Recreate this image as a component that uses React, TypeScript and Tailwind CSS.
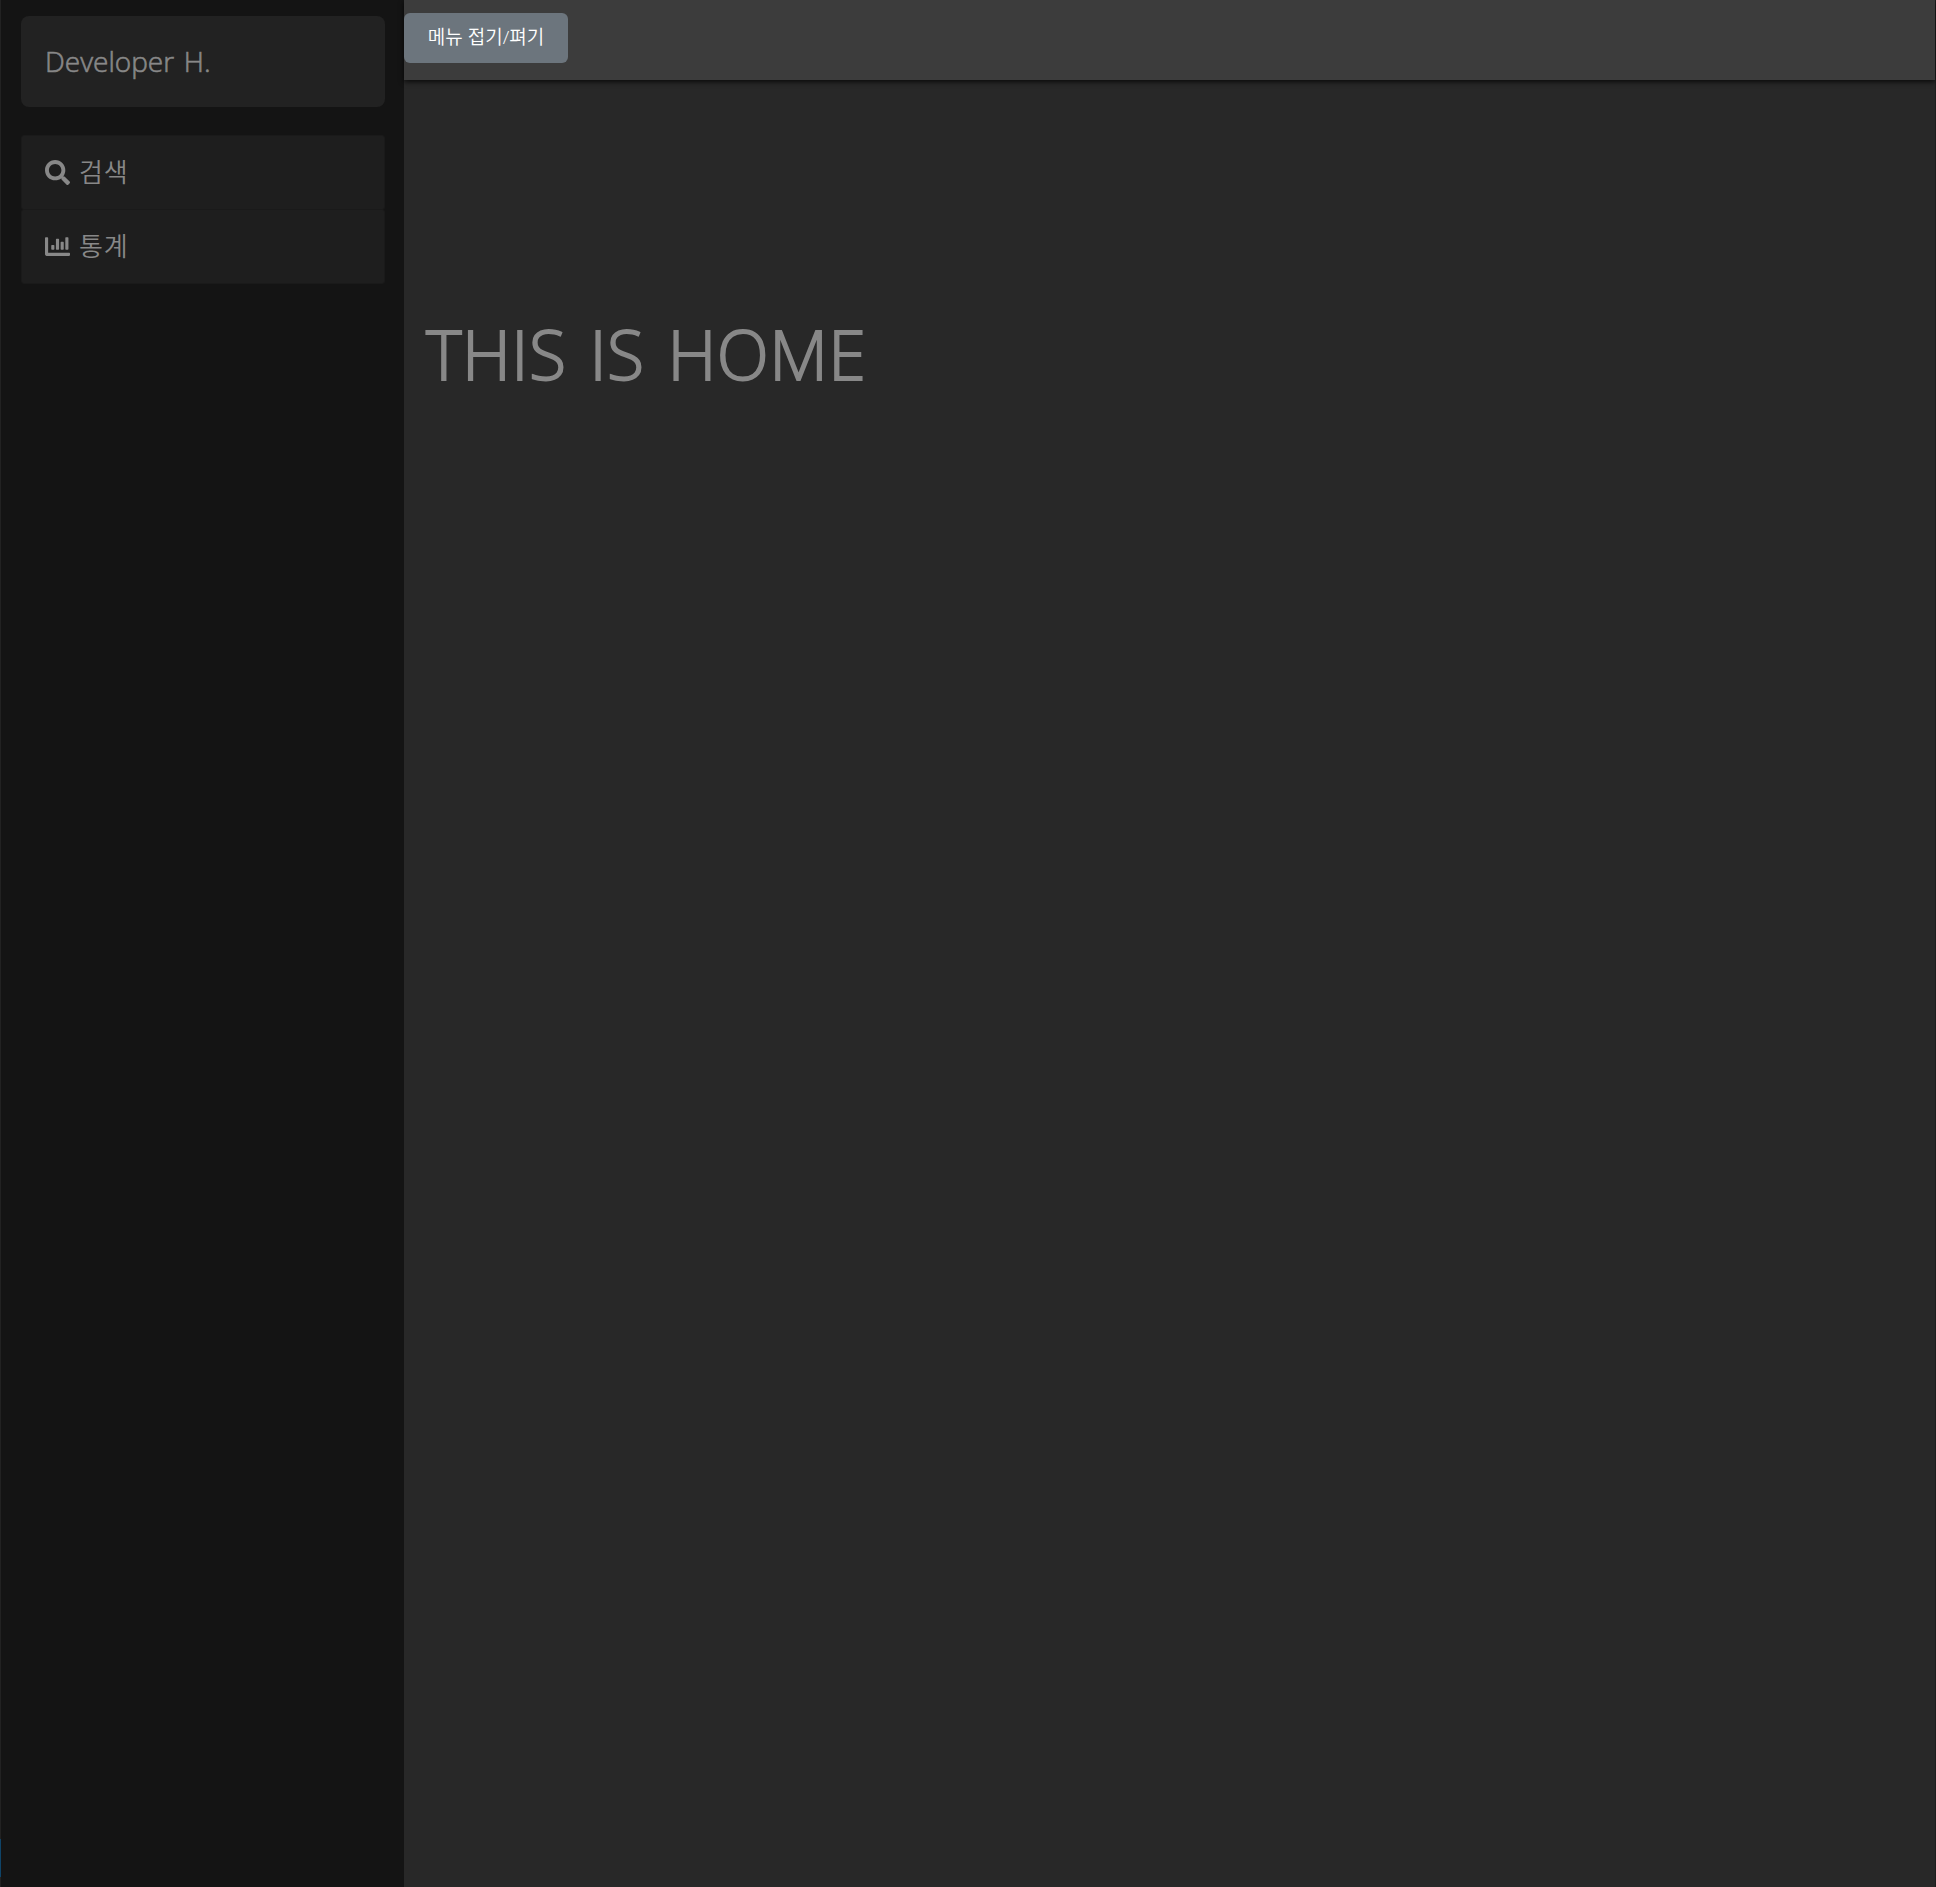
import type { ReactNode } from "react";
import { FaSearch } from "react-icons/fa";

function ChartIcon() {
  return (
    <svg viewBox="0 0 512 512" className="block size-[25px]" fill="currentColor">
      <path d="M332.8 320h38.4c6.4 0 12.8-6.4 12.8-12.8V172.800c0-6.400-6.400-12.800-12.800-12.800h-38.400c-6.400 0-12.800 6.400-12.800 12.800v134.400c0 6.400 6.400 12.800 12.800 12.800zm96 0h38.400c6.400 0 12.800-6.400 12.800-12.800V76.800c0-6.400-6.400-12.800-12.800-12.800h-38.400c-6.400 0-12.800 6.400-12.800 12.800v230.400c0 6.400 6.400 12.800 12.800 12.800zm-288 0h38.400c6.400 0 12.800-6.400 12.800-12.800v-70.400c0-6.400-6.400-12.800-12.800-12.800h-38.400c-6.400 0-12.800 6.400-12.800 12.800v70.400c0 6.400 6.400 12.800 12.800 12.800zm96 0h38.400c6.400 0 12.800-6.400 12.800-12.800V108.800c0-6.400-6.400-12.800-12.800-12.800h-38.400c-6.400 0-12.800 6.400-12.800 12.800v198.400c0 6.400 6.400 12.800 12.800 12.800zM496 384H64V80c0-8.840-7.160-16-16-16H16C7.160 64 0 71.160 0 80v336c0 17.670 14.330 32 32 32h464c8.840 0 16-7.160 16-16v-32c0-8.840-7.160-16-16-16z" />
    </svg>
  );
}

function MenuItem({ icon, label }: { icon: ReactNode; label: string }) {
  return (
    <li className="-mt-px flex h-[75px] items-center gap-[9px] rounded-[3px] border border-[#1a1a1a] bg-[#1e1e1e] pl-[23px]">
      {icon}
      <span className="pb-px text-[26px] leading-none font-[350] tracking-[0.8px]">{label}</span>
    </li>
  );
}

export default function App() {
  return (
    <div className="flex h-[1887px] w-[1936px] border-r border-r-[#1e1e1e] bg-[#282828] font-['Open_Sans','Noto_Sans_CJK_KR',sans-serif] text-[#888888]">
      <div className="flex w-px shrink-0 flex-col justify-end bg-[#222222] pb-[10px]">
        <div className="h-[38px] bg-[#0f4468]" />
      </div>
      <aside className="w-[403px] shrink-0 bg-[#141414] pt-4 pr-[19px] pl-5">
        <div className="flex h-[91px] items-center rounded-lg bg-[#222222] pb-[2px] pl-6 text-[28px] font-light [word-spacing:2.5px] [-webkit-text-stroke:0.6px_#888888]">
          <span>Developer H.</span>
        </div>
        <ul className="mt-[29px] flex flex-col">
          <MenuItem icon={<FaSearch className="block size-[25px]" />} label="검색" />
          <MenuItem icon={<ChartIcon />} label="통계" />
        </ul>
      </aside>
      <div className="flex min-w-0 grow flex-col">
        <header className="h-20 shrink-0 bg-[#3c3c3c] pt-[13px] shadow-[0_2px_5px_rgba(0,0,0,0.75)]">
          <button className="flex h-[50px] w-[164px] items-center justify-center rounded-md bg-[#6c757d] pb-px text-[19px] font-[350] whitespace-nowrap text-white">
            메뉴 접기/펴기
          </button>
        </header>
        <main className="px-[22px] pt-[229px]">
          <h1 className="text-[68px] leading-[90px] font-light tracking-[0.4px] whitespace-nowrap [word-spacing:5px] [-webkit-text-stroke:1.8px_#888888]">
            THIS IS HOME
          </h1>
        </main>
      </div>
    </div>
  );
}
